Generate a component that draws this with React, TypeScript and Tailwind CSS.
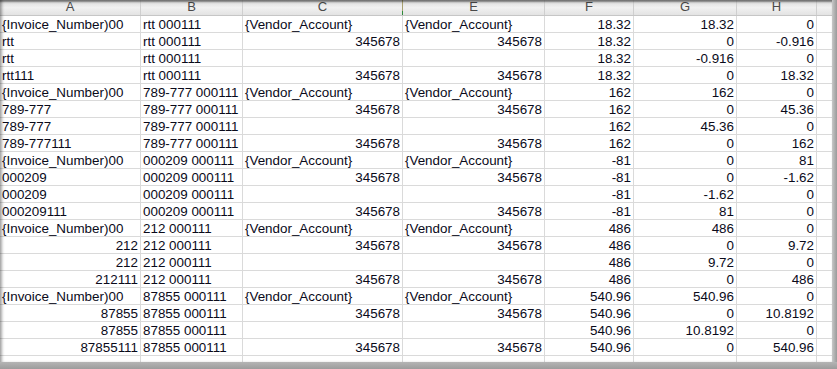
import React from "react";

type Cell = { t: string; r?: boolean };
const L = (t: string): Cell => ({ t });
const R = (t: string): Cell => ({ t, r: true });
const E: Cell = { t: "" };

const groups = [
  { inv: "rtt", invR: false, b: "rtt 000111", f: "18.32", g: ["18.32", "0", "-0.916", "0"], h: ["0", "-0.916", "0", "18.32"] },
  { inv: "789-777", invR: false, b: "789-777 000111", f: "162", g: ["162", "0", "45.36", "0"], h: ["0", "45.36", "0", "162"] },
  { inv: "000209", invR: false, b: "000209 000111", f: "-81", g: ["0", "0", "-1.62", "81"], h: ["81", "-1.62", "0", "0"] },
  { inv: "212", invR: true, b: "212 000111", f: "486", g: ["486", "0", "9.72", "0"], h: ["0", "9.72", "0", "486"] },
  { inv: "87855", invR: true, b: "87855 000111", f: "540.96", g: ["540.96", "0", "10.8192", "0"], h: ["0", "10.8192", "0", "540.96"] },
];

const rows: Cell[][] = [];
groups.forEach((g) => {
  const a = (t: string) => (g.invR ? R(t) : L(t));
  rows.push([L("{Invoice_Number)00"), L(g.b), L("{Vendor_Account}"), L("{Vendor_Account}"), R(g.f), R(g.g[0]), R(g.h[0])]);
  rows.push([a(g.inv), L(g.b), R("345678"), R("345678"), R(g.f), R(g.g[1]), R(g.h[1])]);
  rows.push([a(g.inv), L(g.b), E, E, R(g.f), R(g.g[2]), R(g.h[2])]);
  rows.push([a(g.inv + "111"), L(g.b), R("345678"), R("345678"), R(g.f), R(g.g[3]), R(g.h[3])]);
});

const cols = "grid-cols-[141px_102px_160px_142px_89px_103px_80px_16px]";
const headers = ["A", "B", "C", "E", "F", "G", "H", ""];

export default function App() {
  return (
    <div
      className="w-[837px] h-[369px] bg-[#a2a2a2] flex flex-col overflow-hidden"
      style={{ fontFamily: '"Liberation Sans", Arial, sans-serif' }}
    >
      <div className="flex h-[362px]">
        <div className="relative w-[832px] h-[362px] bg-white overflow-hidden">
          <div className={`grid ${cols} h-[16px] border-b border-[#c6c6c6] bg-gradient-to-b from-[#d9d9d9] via-[#f1f1f1] to-[#e3e3e3]`}>
            {headers.map((h, i) => (
              <div
                key={i}
                className={`relative text-center text-[13px] leading-[13px] text-[#4a4a4a] ${
                  i === 2 ? "border-r border-[#a8a070]" : i < 7 ? "border-r border-[#cfcfcf]" : ""
                }`}
              >
                {h}
                {i === 2 && <div className="absolute right-[-1px] bottom-0 w-[1px] h-[4px] bg-[#2f8a3a]" />}
              </div>
            ))}
          </div>
          {rows.map((row, ri) => (
            <div key={ri} className={`grid ${cols} h-[17px] border-b border-[#dadada]`}>
              {row.map((c, ci) => (
                <div
                  key={ci}
                  className={`border-r border-[#dadada] px-[2px] text-[13.4px] leading-[17px] text-[#0a0a1a] whitespace-nowrap overflow-hidden ${
                    c.r ? "text-right" : "text-left"
                  }`}
                >
                  {c.t}
                </div>
              ))}
              <div />
            </div>
          ))}
          <div className={`grid ${cols} h-[17px]`}>
            {headers.map((_, i) => (
              <div key={i} className={i < 7 ? "border-r border-[#dadada]" : ""} />
            ))}
          </div>
          <div className="pointer-events-none absolute inset-0 shadow-[inset_0_3px_2px_-1px_rgba(0,0,0,0.45),inset_3px_0_3px_-1px_rgba(0,0,0,0.35)]" />
        </div>
        <div className="w-[5px] h-full bg-gradient-to-r from-[#c8c8c8] to-[#9a9a9a]" />
      </div>
      <div className="h-[7px] bg-gradient-to-b from-[#b4b4b4] to-[#9c9c9c]" />
    </div>
  );
}
